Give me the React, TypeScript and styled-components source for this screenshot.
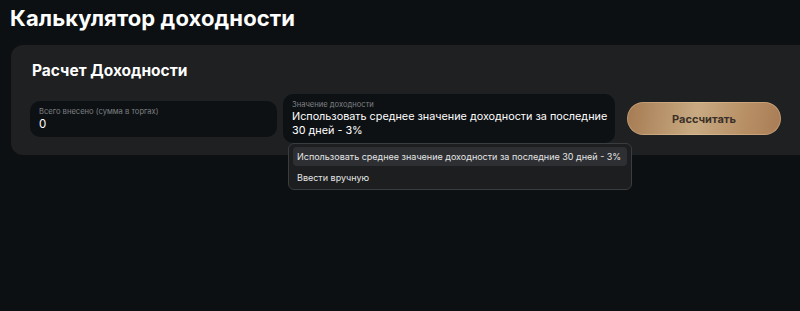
import React, { useState } from "react";
import styled, { createGlobalStyle } from "styled-components";

const GlobalStyle = createGlobalStyle`
  html, body {
    margin: 0;
    padding: 0;
    background: #0d1013;
    overflow: hidden;
    font-family: Inter, "Noto Sans", "Liberation Sans", sans-serif;
  }
`

const Page = styled.div`
  width: 800px;
  height: 311px;
  padding: 3px 0 0 10px;
  box-sizing: border-box;
  color: #ffffff;
`

const PageTitle = styled.h1`
  margin: 0 0 12px 0;
  font-size: 22px;
  line-height: 30px;
  font-weight: 700;
  letter-spacing: 0.1px;
`

const Card = styled.section`
  margin-left: 1px;
  margin-right: -40px;
  height: 110px;
  background: #1e2022;
  border-radius: 12px;
  padding: 15px 0 0 19px;
  box-sizing: border-box;
`

const CardTitle = styled.h2`
  margin: 0 0 12px 2px;
  font-size: 15.5px;
  line-height: 22px;
  font-weight: 700;
`

const Row = styled.div`
  display: flex;
  align-items: center;
`

const Field = styled.div<{ w: number; h: number; gapRight: number }>`
  position: relative;
  width: ${(p) => p.w + "px"};
  height: ${(p) => p.h + "px"};
  margin-right: ${(p) => p.gapRight + "px"};
  background: #0e1114;
  border-radius: 10px;
  padding: 0 4px 0 9px;
  box-sizing: border-box;
  display: flex;
  flex-direction: column;
  justify-content: center;
  flex-shrink: 0;
`

const Label = styled.span`
  font-size: 7.6px;
  line-height: 10px;
  color: #7d8083;
`

const Value = styled.span<{ size: number }>`
  font-size: ${(p) => p.size + "px"};
  line-height: 14px;
  color: #ffffff;
`

const Menu = styled.ul`
  position: absolute;
  top: 49px;
  left: 5px;
  width: 344px;
  height: 47px;
  margin: 0;
  padding: 3px 4px;
  box-sizing: border-box;
  list-style: none;
  background: #1c1e20;
  border: 1px solid #3a3c3e;
  border-radius: 6px;
  z-index: 2;
`

const MenuItem = styled.li<{ active?: boolean }>`
  height: 19px;
  margin-bottom: 2px;
  padding: 0 4px;
  display: flex;
  align-items: center;
  font-size: 9px;
  color: #e6e6e6;
  border-radius: 4px;
  background: ${(p) => (p.active ? "#2d2f32" : "transparent")};
  white-space: nowrap;
  cursor: pointer;
`

const Button = styled.button`
  width: 154px;
  height: 33px;
  border: none;
  border-radius: 17px;
  background: linear-gradient(100deg, #a57a52 0%, #c8aa82 45%, #b89066 75%, #a87c55 100%);
  box-shadow: inset 0 0 0 1px rgba(255, 230, 190, 0.25);
  color: #3b3028;
  font-family: inherit;
  font-size: 11px;
  font-weight: 700;
  cursor: pointer;
  flex-shrink: 0;
`

export default function App() {
  const [choice, setChoice] = useState(0);
  const options = [
    "Использовать среднее значение доходности за последние 30 дней - 3%",
    "Ввести вручную",
  ];

  return (
    <Page>
      <GlobalStyle />
      <PageTitle>Калькулятор доходности</PageTitle>
      <Card>
        <CardTitle>Расчет Доходности</CardTitle>
        <Row>
          <Field w={247} h={36} gapRight={6}>
            <Label>Всего внесено (сумма в торгах)</Label>
            <Value size={11.5}>0</Value>
          </Field>
          <Field w={332} h={49} gapRight={12}>
            <Label>Значение доходности</Label>
            <Value size={10.8}>{options[choice]}</Value>
            <Menu>
              {options.map((o, i) => (
                <MenuItem key={o} active={i === 0} onClick={() => setChoice(i)}>
                  {o}
                </MenuItem>
              ))}
            </Menu>
          </Field>
          <Button>Рассчитать</Button>
        </Row>
      </Card>
    </Page>
  );
}
